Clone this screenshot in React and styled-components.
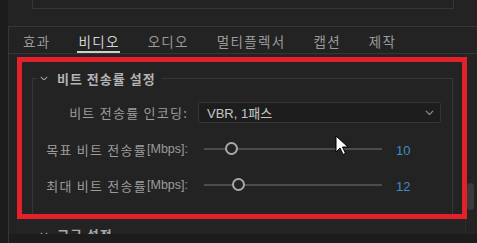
import React from 'react';
import styled, { createGlobalStyle } from 'styled-components';

const GlobalStyle = createGlobalStyle`
  html, body {
    margin: 0;
    padding: 0;
    background: #232323;
  }
  body {
    font-family: "Liberation Sans", "Noto Sans CJK KR", sans-serif;
  }
`;

const Screen = styled.div`
  position: relative;
  width: 477px;
  height: 243px;
  overflow: hidden;
  display: flex;
  background: #232323;
`;

const SideStrip = styled.div`
  width: 8px;
  flex: none;
  background: #1c1c1c;
`;

const Main = styled.div`
  flex: 1;
  display: flex;
  flex-direction: column;
  min-width: 0;
`;

const TopArea = styled.div`
  height: 26px;
  flex: none;
`;

const PrevBox = styled.div`
  margin-left: 24px;
  width: 420px;
  height: 8px;
  border: 1px solid #363636;
  border-top: none;
`;

const Panel = styled.div`
  flex: 1;
  display: flex;
  flex-direction: column;
  border-top: 1px solid #363636;
  border-left: 1px solid #363636;
  min-height: 0;
`;

const TabBar = styled.div`
  height: 26px;
  flex: none;
  display: flex;
  align-items: stretch;
  gap: 28px;
  padding-left: 14px;
  border-bottom: 1px solid #363636;
`;

const Tab = styled.div`
  position: relative;
  display: flex;
  align-items: center;
  padding-top: 2px;
  font-family: "Noto Sans CJK KR", sans-serif;
  font-size: 13.5px;
  letter-spacing: 1.3px;
  color: ${p => (p.$active ? '#d2d2d2' : '#9a9a9a')};

  &::after {
    content: '';
    display: ${p => (p.$active ? 'block' : 'none')};
    position: absolute;
    left: -1px;
    right: 0;
    bottom: 0;
    height: 2px;
    background: #cfcfcf;
  }
`;

const Body = styled.div`
  flex: 1;
  display: flex;
  min-height: 0;
`;

const Viewport = styled.div`
  flex: 1;
  overflow: hidden;
  padding: 16px 12px 0 23px;
`;

const ScrollColumn = styled.div`
  width: 9px;
  flex: none;
  border-left: 1px solid #2c2c2c;
  padding: 129px 1px 0 1px;
`;

const Thumb = styled.div`
  width: 7px;
  height: 27px;
  border-radius: 4px;
  background: #3a3a3a;
`;

const Group = styled.fieldset`
  margin: 0;
  padding: 0 11px 20px 0;
  border: 1px solid #373737;
  border-bottom: none;
  min-width: 0;
`;

const Legend = styled.legend`
  display: flex;
  align-items: center;
  gap: 9px;
  margin-left: 4px;
  padding: 0 6px 0 3px;
  height: 16px;
`;

const Title = styled.span`
  font-family: "Noto Sans CJK KR", sans-serif;
  font-weight: 700;
  font-size: 13px;
  letter-spacing: 1px;
  color: ${p => (p.$dim ? '#a8a8a8' : '#b4b4b4')};
`;

const Chevron = ({ color = '#9a9a9a', size = 8 }) => (
  <svg width={size} height={size * 0.6} viewBox="0 0 10 6" fill="none">
    <path d="M1 1l4 4 4-4" stroke={color} strokeWidth="1.4" />
  </svg>
);

const Form = styled.div`
  display: grid;
  grid-template-columns: 155px 1fr;
  column-gap: 10px;
  row-gap: 16px;
  padding-top: 16px;
`;

const Label = styled.div`
  height: 20px;
  display: flex;
  align-items: center;
  justify-content: flex-end;
  font-size: 12.5px;
  color: #9c9c9c;
  white-space: nowrap;
`;

const Hangul = styled.span`
  font-family: "Noto Sans CJK KR", sans-serif;
  font-size: 13px;
  letter-spacing: ${p => (p.$tight ? '0' : '1.25px')};
`;

const Select = styled.div`
  height: 19px;
  display: flex;
  align-items: center;
  justify-content: space-between;
  padding: 0 6px 0 8px;
  background: #1d1d1d;
  border: 1px solid #343434;
  border-radius: 2px;
  font-size: 13px;
  color: #c6c6c6;
`;

const SliderRow = styled.div`
  height: 20px;
  display: flex;
  align-items: center;
`;

const Track = styled.div`
  position: relative;
  flex: 1;
  height: 2px;
  margin: 0 14px 0 6px;
  background: #4c4c4c;
`;

const Knob = styled.div`
  position: absolute;
  top: -6px;
  width: 13px;
  height: 13px;
  margin-left: -7px;
  box-sizing: border-box;
  border-radius: 50%;
  border: 2px solid #a9a9a9;
  background: #232323;
`;

const Value = styled.div`
  width: 45px;
  font-size: 13px;
  color: #3f8bc4;
  padding-top: 2px;
`;

const NextSection = styled.div`
  display: flex;
  align-items: center;
  gap: 9px;
  margin: 11px 0 0 8px;
  height: 16px;
`;

const Footer = styled.div`
  height: 9px;
  flex: none;
  background: #1c1c1c;
`;

const Highlight = styled.div`
  position: absolute;
  left: 17px;
  top: 57px;
  width: 450px;
  height: 162px;
  box-sizing: border-box;
  border: 5px solid #e4202a;
  pointer-events: none;
`;

const Pointer = styled.svg`
  position: absolute;
  left: 335px;
  top: 135px;
`;

const MIN = 2;
const MAX = 53;

const Slider = ({ value }) => (
  <SliderRow>
    <Track>
      <Knob style={{ left: `${((value - MIN) / (MAX - MIN)) * 100}%` }} />
    </Track>
    <Value>{value}</Value>
  </SliderRow>
);

const tabs = ['효과', '비디오', '오디오', '멀티플렉서', '캡션', '제작'];

export default function App() {
  return (
    <>
      <GlobalStyle />
      <Screen>
        <SideStrip />
        <Main>
          <TopArea>
            <PrevBox />
          </TopArea>
          <Panel>
            <TabBar>
              {tabs.map(t => (
                <Tab key={t} $active={t === '비디오'}>{t}</Tab>
              ))}
            </TabBar>
            <Body>
              <Viewport>
                <Group>
                  <Legend>
                    <Chevron />
                    <Title>비트 전송률 설정</Title>
                  </Legend>
                  <Form>
                    <Label><Hangul>비트 전송률 인코딩:</Hangul></Label>
                    <Select>
                      <span>VBR, 1<Hangul $tight>패스</Hangul></span>
                      <Chevron color="#8a8a8a" size={9} />
                    </Select>
                    <Label><Hangul>목표 비트 전송률</Hangul>[Mbps]:</Label>
                    <Slider value={10} />
                    <Label><Hangul>최대 비트 전송률</Hangul>[Mbps]:</Label>
                    <Slider value={12} />
                  </Form>
                </Group>
                <NextSection>
                  <Chevron />
                  <Title $dim>고급 설정</Title>
                </NextSection>
              </Viewport>
              <ScrollColumn>
                <Thumb />
              </ScrollColumn>
            </Body>
            <Footer />
          </Panel>
        </Main>
        <Highlight />
        <Pointer width="14" height="21" viewBox="0 0 14 21">
          <path d="M1 1v16l4-4 3 6.5 2.5-1.2-3-6.3h5.5z" fill="#fff" stroke="#000" strokeWidth="1" />
        </Pointer>
      </Screen>
    </>
  );
}
